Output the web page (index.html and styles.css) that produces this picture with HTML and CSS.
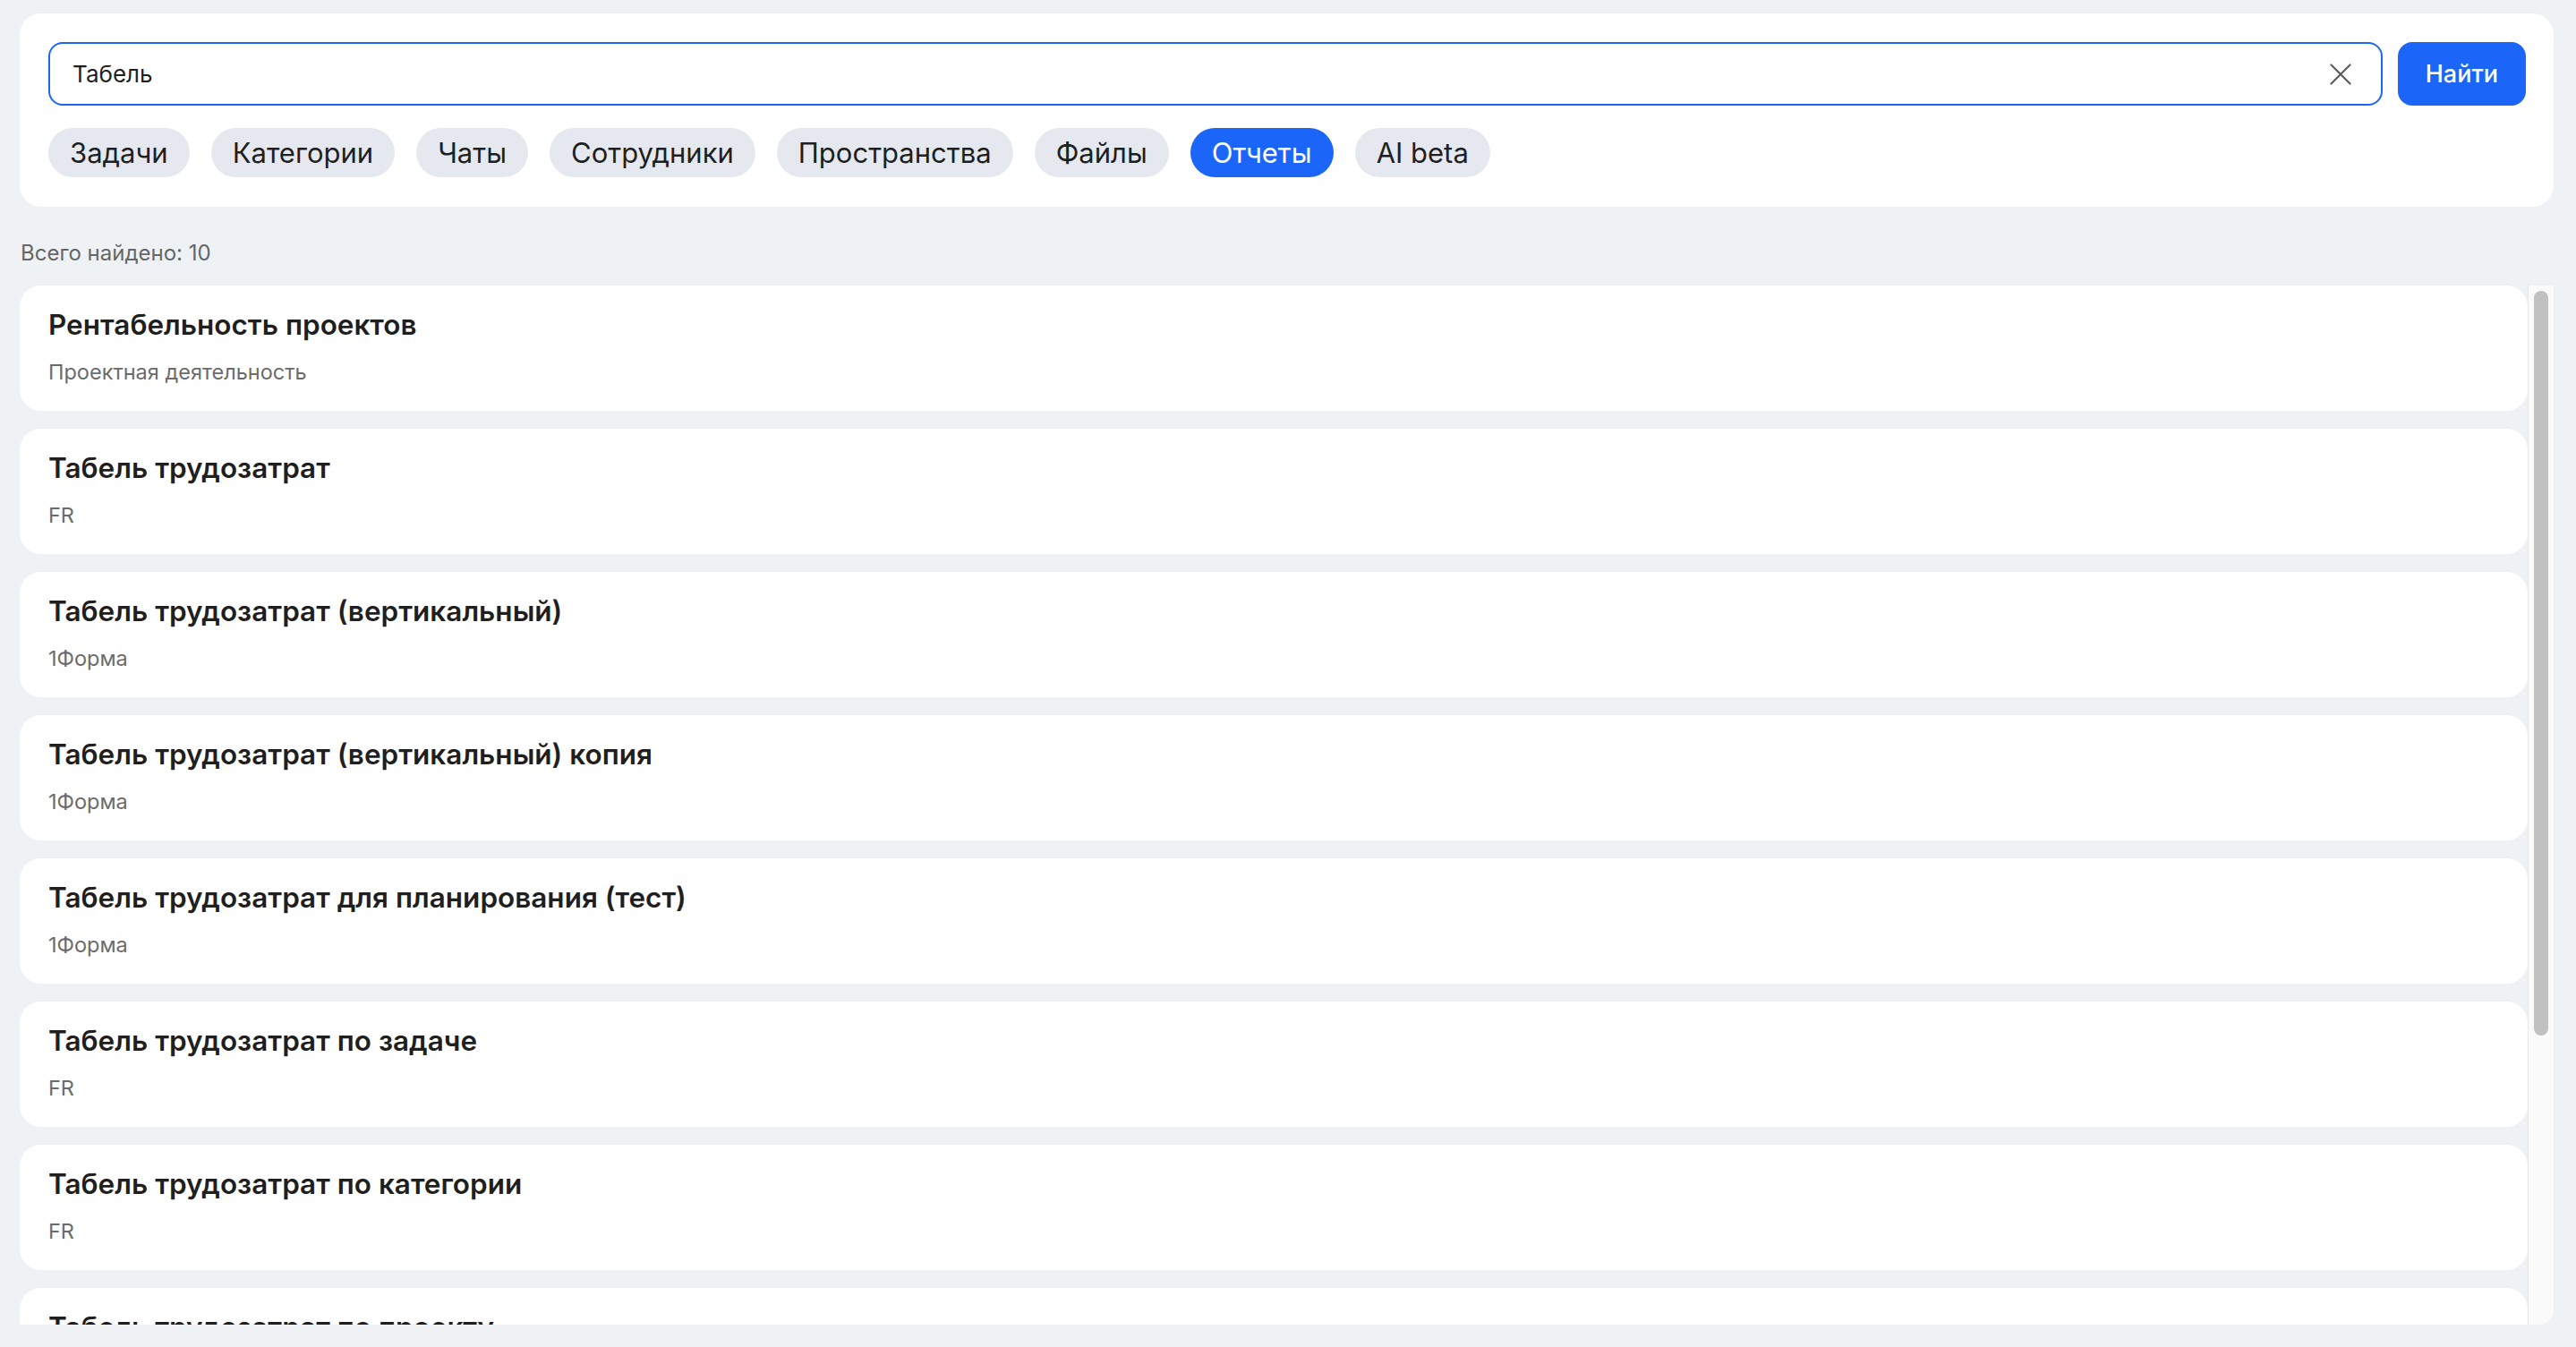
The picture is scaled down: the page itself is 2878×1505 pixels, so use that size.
FILE: index.html
```html
<!DOCTYPE html>
<html lang="ru">
<head>
<meta charset="utf-8">
<title>Поиск</title>
<link rel="stylesheet" href="styles.css">
</head>
<body>
  <section class="search-panel">
    <div class="search-row">
      <div class="search-field">
        <input class="search-input" type="text" value="Табель">
        <button class="clear-btn" aria-label="Очистить">
          <svg viewBox="0 0 24 24" width="24" height="24"><path d="M1.5 1.5 L22.5 22.5 M22.5 1.5 L1.5 22.5" stroke="#5c5c5c" stroke-width="2.2" stroke-linecap="round" fill="none"/></svg>
        </button>
      </div>
      <button class="find-btn">Найти</button>
    </div>
    <div class="chips">
      <span class="chip">Задачи</span>
      <span class="chip">Категории</span>
      <span class="chip">Чаты</span>
      <span class="chip">Сотрудники</span>
      <span class="chip">Пространства</span>
      <span class="chip">Файлы</span>
      <span class="chip active">Отчеты</span>
      <span class="chip">AI beta</span>
    </div>
  </section>

  <div class="found">Всего найдено: 10</div>

  <div class="results-wrap">
    <div class="results">
      <div class="card"><div class="card-title">Рентабельность проектов</div><div class="card-sub">Проектная деятельность</div></div>
      <div class="card"><div class="card-title">Табель трудозатрат</div><div class="card-sub">FR</div></div>
      <div class="card"><div class="card-title">Табель трудозатрат (вертикальный)</div><div class="card-sub">1Форма</div></div>
      <div class="card"><div class="card-title">Табель трудозатрат (вертикальный) копия</div><div class="card-sub">1Форма</div></div>
      <div class="card"><div class="card-title">Табель трудозатрат для планирования (тест)</div><div class="card-sub">1Форма</div></div>
      <div class="card"><div class="card-title">Табель трудозатрат по задаче</div><div class="card-sub">FR</div></div>
      <div class="card"><div class="card-title">Табель трудозатрат по категории</div><div class="card-sub">FR</div></div>
      <div class="card"><div class="card-title">Табель трудозатрат по проекту</div><div class="card-sub">FR</div></div>
      <div class="card"><div class="card-title">Табель трудозатрат по сотруднику</div><div class="card-sub">FR</div></div>
      <div class="card"><div class="card-title">Табель учета рабочего времени</div><div class="card-sub">1Форма</div></div>
    </div>
    <div class="scrollbar"><div class="scrollbar-thumb"></div></div>
  </div>
</body>
</html>
```

FILE: styles.css
```css
* { box-sizing: border-box; }

html, body { height: 100%; }

body {
  margin: 0;
  padding: 15px 25px 25px 22px;
  background: #eff2f5;
  font-family: Inter, "Noto Sans", "Liberation Sans", sans-serif;
  color: #1f1f1f;
  display: flex;
  flex-direction: column;
  overflow: hidden;
}

.search-panel {
  background: #ffffff;
  border-radius: 24px;
  padding: 32px 31px 33px 32px;
  flex-shrink: 0;
}

.search-row {
  display: flex;
  gap: 17px;
}

.search-field {
  flex: 1;
  display: flex;
  align-items: center;
  height: 71px;
  border: 2px solid #1b66f6;
  border-radius: 16px;
  padding: 0 33px 0 25px;
  background: #fff;
}

.search-input {
  flex: 1;
  border: none;
  outline: none;
  padding: 0;
  font-family: inherit;
  font-size: 26px;
  color: #1f1f1f;
  background: transparent;
}

.clear-btn {
  border: none;
  background: none;
  padding: 0;
  width: 24px;
  height: 24px;
  display: flex;
}

.find-btn {
  height: 71px;
  padding: 0 31px;
  border: none;
  border-radius: 16px;
  background: #1b66f8;
  color: #ffffff;
  font-family: inherit;
  font-size: 27px;
  font-weight: 500;
}

.chips {
  display: flex;
  gap: 24px;
  margin-top: 25px;
}

.chip {
  height: 55px;
  padding: 0 24px;
  border-radius: 28px;
  background: #e5e9ef;
  color: #1f1f1f;
  font-size: 31px;
  display: flex;
  align-items: center;
}

.chip.active {
  background: #1b66f8;
  color: #ffffff;
}

.found {
  margin: 36px 0 20px 1px;
  font-size: 24px;
  line-height: 32px;
  color: #666666;
  flex-shrink: 0;
}

.results-wrap {
  flex: 1;
  min-height: 0;
  display: flex;
  overflow: hidden;
  border-bottom-right-radius: 16px;
}

.results {
  flex: 1;
  min-width: 0;
  overflow: hidden;
  display: flex;
  flex-direction: column;
  gap: 20px;
}

.scrollbar {
  width: 29px;
  flex-shrink: 0;
  background: #fafafa;
  border-left: 1px solid #e6e6e6;
  padding: 6px 5px 0 6px;
}

.scrollbar-thumb {
  width: 16px;
  height: 832px;
  border-radius: 8px;
  background: #c1c1c1;
}

.card {
  flex-shrink: 0;
  background: #ffffff;
  border-radius: 24px;
  padding: 24px 32px 27px 32px;
}

.card-title {
  font-size: 31.5px;
  line-height: 40px;
  font-weight: 600;
  color: #1f1f1f;
  white-space: nowrap;
}

.card-sub {
  margin-top: 17px;
  font-size: 23.5px;
  line-height: 32px;
  color: #6b6b6b;
}
```
